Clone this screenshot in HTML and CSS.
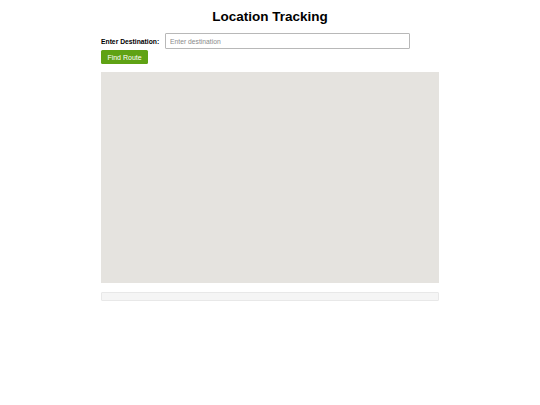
FILE: index.html
```html
<!DOCTYPE html>
<html lang="en">
<head>
<meta charset="utf-8">
<title>Location Tracking</title>
<link rel="stylesheet" href="styles.css">
</head>
<body>
<div class="container">
  <h1 class="title">Location Tracking</h1>
  <form class="route-form">
    <div class="field-row">
      <label class="field-label" for="dest">Enter Destination:</label>
      <input class="field-input" id="dest" type="text" placeholder="Enter destination">
    </div>
    <button class="btn" type="button">Find Route</button>
  </form>
  <div class="map"></div>
  <div class="info"></div>
</div>
</body>
</html>
```

FILE: styles.css
```css
* { box-sizing: border-box; }
html, body { margin: 0; padding: 0; background: #fff; }
body { font-family: "Liberation Sans", Arial, sans-serif; color: #000; }
.container {
  width: 338px;
  margin: 0 auto;
  display: flex;
  flex-direction: column;
}
.title {
  margin: 0;
  padding-top: 9px;
  font-size: 13.5px;
  line-height: 16px;
  font-weight: bold;
  text-align: center;
}
.route-form {
  margin-top: 8px;
  display: flex;
  flex-direction: column;
  align-items: flex-start;
}
.field-row {
  display: flex;
  align-items: center;
  height: 16px;
}
.field-label {
  font-size: 6.75px;
  font-weight: bold;
  margin-right: 6px;
  width: 58px;
  white-space: nowrap;
}
.field-input {
  width: 245px;
  height: 16px;
  margin: 0;
  padding: 0 4px;
  border: 1px solid #b8b8b8;
  border-radius: 1px;
  font-family: "Liberation Sans", Arial, sans-serif;
  font-size: 6.75px;
  outline: none;
}
.field-input::placeholder { color: #8a8a8a; }
.btn {
  margin-top: 1px;
  width: 47px;
  height: 14px;
  padding: 0;
  border: none;
  border-radius: 1.5px;
  background: #5fa214;
  color: #fff;
  font-family: "Liberation Sans", Arial, sans-serif;
  font-size: 7px;
}
.map {
  margin-top: 8px;
  height: 211px;
  background: #e5e3df;
}
.info {
  margin-top: 9px;
  height: 9px;
  background: #f5f5f5;
  border: 1px solid #e8e8e8;
  border-radius: 1px;
}
```
